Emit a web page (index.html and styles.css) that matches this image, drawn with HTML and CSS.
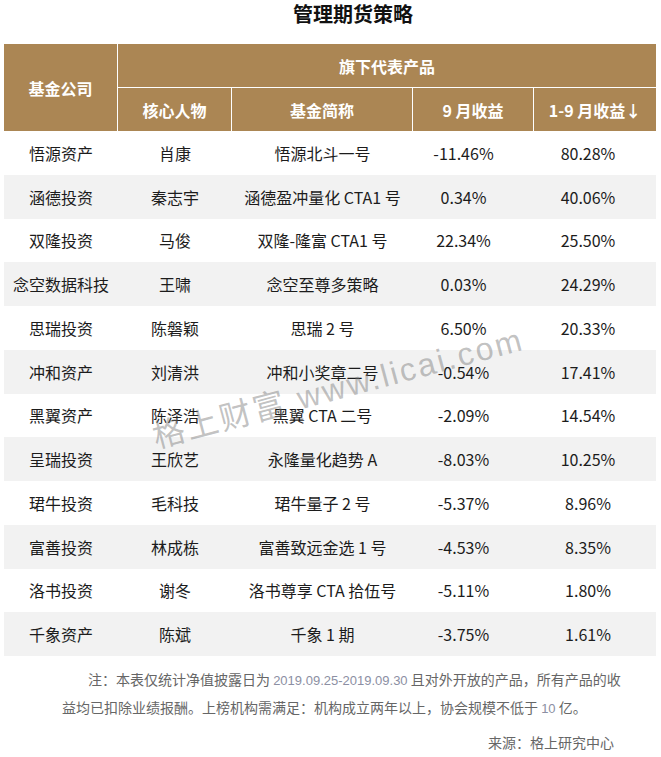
FILE: index.html
```html
<!DOCTYPE html>
<html lang="zh-CN">
<head>
<meta charset="utf-8">
<title>管理期货策略</title>
<link rel="stylesheet" href="styles.css">
</head>
<body>
<div class="page">
  <h1 class="title">管理期货策略</h1>
  <table class="fund-table">
    <colgroup>
      <col class="c1"><col class="c2"><col class="c3"><col class="c4"><col class="c5">
    </colgroup>
    <thead>
      <tr class="h1">
        <th rowspan="2" class="hc bl">基金公司</th>
        <th colspan="4" class="hc">旗下代表产品</th>
      </tr>
      <tr class="h2">
        <th class="hc bl">核心人物</th>
        <th class="hc bl">基金简称</th>
        <th class="hc bl">9 月收益</th>
        <th class="hc">1-9 月收益↓</th>
      </tr>
    </thead>
    <tbody>
      <tr><td>悟源资产</td><td>肖康</td><td>悟源北斗一号</td><td class="n4">-11.46%</td><td class="n5">80.28%</td></tr>
      <tr class="alt"><td>涵德投资</td><td>秦志宇</td><td>涵德盈冲量化 CTA1 号</td><td class="n4">0.34%</td><td class="n5">40.06%</td></tr>
      <tr><td>双隆投资</td><td>马俊</td><td>双隆-隆富 CTA1 号</td><td class="n4">22.34%</td><td class="n5">25.50%</td></tr>
      <tr class="alt"><td>念空数据科技</td><td>王啸</td><td>念空至尊多策略</td><td class="n4">0.03%</td><td class="n5">24.29%</td></tr>
      <tr><td>思瑞投资</td><td>陈磐颖</td><td>思瑞 2 号</td><td class="n4">6.50%</td><td class="n5">20.33%</td></tr>
      <tr class="alt"><td>冲和资产</td><td>刘清洪</td><td>冲和小奖章二号</td><td class="n4">-0.54%</td><td class="n5">17.41%</td></tr>
      <tr><td>黑翼资产</td><td>陈泽浩</td><td>黑翼 CTA 二号</td><td class="n4">-2.09%</td><td class="n5">14.54%</td></tr>
      <tr class="alt"><td>呈瑞投资</td><td>王欣艺</td><td>永隆量化趋势 A</td><td class="n4">-8.03%</td><td class="n5">10.25%</td></tr>
      <tr><td>珺牛投资</td><td>毛科技</td><td>珺牛量子 2 号</td><td class="n4">-5.37%</td><td class="n5">8.96%</td></tr>
      <tr class="alt"><td>富善投资</td><td>林成栋</td><td>富善致远金选 1 号</td><td class="n4">-4.53%</td><td class="n5">8.35%</td></tr>
      <tr><td>洛书投资</td><td>谢冬</td><td>洛书尊享 CTA 拾伍号</td><td class="n4">-5.11%</td><td class="n5">1.80%</td></tr>
      <tr class="alt"><td>千象资产</td><td>陈斌</td><td>千象 1 期</td><td class="n4">-3.75%</td><td class="n5">1.61%</td></tr>
    </tbody>
  </table>
  <p class="note">注：本表仅统计净值披露日为 <span class="num">2019.09.25-2019.09.30</span> 且对外开放的产品，所有产品的收益均已扣除业绩报酬。上榜机构需满足：机构成立两年以上，协会规模不低于 <span class="num">10</span> 亿。</p>
  <p class="source">来源：格上研究中心</p>
  <div class="watermark">格上财富 www.licai.com</div>
</div>
</body>
</html>
```

FILE: styles.css
```css
html, body {
  margin: 0;
  padding: 0;
  background: #ffffff;
}

.page {
  position: relative;
  width: 661px;
  height: 757px;
  padding: 0 5px 0 4px;
  box-sizing: border-box;
  font-family: "Noto Sans CJK SC", "Noto Sans", sans-serif;
  color: #1c1c1c;
}

.title {
  margin: 0;
  padding: 3px 0 0 46px;
  height: 44px;
  box-sizing: border-box;
  text-align: center;
  font-size: 20px;
  line-height: 22px;
  font-weight: bold;
  color: #111;
}

.fund-table {
  width: 652px;
  border-collapse: separate;
  border-spacing: 0;
  table-layout: fixed;
  font-size: 16px;
}

.c1 { width: 114px; }
.c2 { width: 114px; }
.c3 { width: 181px; }
.c4 { width: 121px; }
.c5 { width: 122px; }

.hc {
  background: #ab8654;
  color: #ffffff;
  font-weight: bold;
  text-align: center;
  padding: 0;
  font-size: 16px;
}

.bl { border-right: 1px solid #ffffff; }

.h1 .hc { height: 43px; }
.h1 th[colspan] { border-bottom: 1px solid #ffffff; }
.h2 .hc { height: 43px; }

.fund-table td {
  height: 43.75px;
  padding: 0;
  text-align: center;
  line-height: 20px;
  white-space: nowrap;
}

.fund-table tr.alt td { background: #f2f2f2; }

.fund-table td.n4 { padding-right: 20px; }
.fund-table td.n5 { padding-right: 14px; }

.note {
  margin: 10px 0 0 58px;
  width: 562px;
  font-size: 14px;
  line-height: 26px;
  text-indent: 26px;
  color: #666666;
}

.num {
  font-family: "Liberation Sans", sans-serif;
  font-size: 13px;
  color: #8c8fa3;
}

.source {
  margin: 10px 42px 0 0;
  text-align: right;
  font-size: 14px;
  line-height: 20px;
  color: #666666;
}

.watermark {
  position: absolute;
  left: 158px;
  top: 419px;
  transform: rotate(-15deg);
  transform-origin: 0 100%;
  font-family: "Liberation Sans", "Noto Sans CJK SC", sans-serif;
  font-size: 32px;
  line-height: 36px;
  letter-spacing: 2.5px;
  white-space: nowrap;
  color: rgba(120, 120, 120, 0.45);
  pointer-events: none;
}
```
